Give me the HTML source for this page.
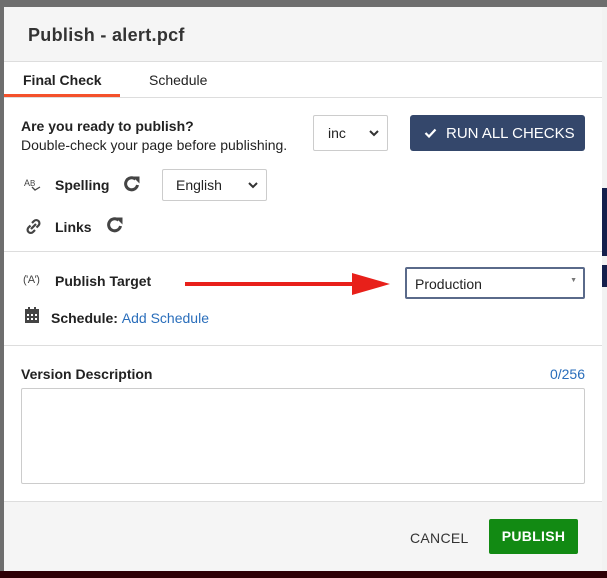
<!DOCTYPE html>
<html><head><style>
*{box-sizing:border-box;margin:0;padding:0}
body{width:607px;height:578px;background:#6e6e6e;position:relative;overflow:hidden;font-family:"Liberation Sans",Arial,sans-serif;color:#222}
.bgr{position:absolute;left:602px;top:7px;width:5px;height:565px;background:#f2f2f2}
.nv{position:absolute;background:#141f4c}
.btm{position:absolute;left:0;top:571px;width:607px;height:7px;background:#2e0006}
.m{position:absolute;left:4px;top:7px;width:598px;height:564px;background:#fff}
.hd{position:absolute;left:0;top:0;width:100%;height:55px;background:#f5f5f5;border-bottom:1px solid #ddd}
.hd h1{position:absolute;left:24px;top:18px;font-size:18px;font-weight:bold;color:#333;letter-spacing:.3px}
.tabs{position:absolute;top:55px;left:0;width:100%;height:36px;border-bottom:1px solid #ddd}
.t{position:absolute;top:10px;font-size:14px}
.ul{position:absolute;left:0;top:32px;width:116px;height:3px;background:#f4512c}
.a{position:absolute}
.sel{position:absolute;border:1px solid #ccc;border-radius:2px;background:#fff;font-size:14px}
.chev{position:absolute;right:8px;top:50%;margin-top:-4px}
.b{font-weight:bold;font-size:14px}
.hr{position:absolute;left:0;width:100%;height:1px;background:#ddd}
</style></head><body>
<div class="bgr"></div>
<div class="nv" style="left:602px;top:188px;width:5px;height:68px"></div>
<div class="nv" style="left:602px;top:265px;width:5px;height:22px"></div>
<div class="btm"></div>
<div class="m">
 <div class="hd"><h1>Publish - alert.pcf</h1></div>
 <div class="tabs">
  <div class="t b" style="left:19px;font-size:14px">Final Check</div>
  <div class="t" style="left:145px">Schedule</div>
  <div class="ul"></div>
 </div>
 <div class="a b" style="left:17px;top:111px">Are you ready to publish?</div>
 <div class="a" style="left:17px;top:130px;font-size:14px">Double-check your page before publishing.</div>
 <div class="sel" style="left:309px;top:108px;width:75px;height:36px"><span class="a" style="left:14px;top:9px">inc</span>
  <svg class="chev" width="10" height="8" viewBox="0 0 10 8"><path d="M1 2l4 4 4-4" stroke="#333" stroke-width="2" fill="none"/></svg></div>
 <div class="a" style="left:406px;top:108px;width:175px;height:36px;background:#34476b;border-radius:3px;color:#fff;font-size:15px">
  <svg class="a" style="left:14px;top:13px" width="13" height="10" viewBox="0 0 13 10"><path d="M1.5 5l3.5 3.5L11.5 1.5" stroke="#fff" stroke-width="2.2" fill="none"/></svg>
  <span class="a" style="left:36px;top:10px">RUN ALL CHECKS</span></div>
 <div class="a" style="left:20px;top:171px;font-size:9px;color:#444">A<span style="font-size:8px">B</span></div>
 <svg class="a" style="left:27px;top:179px" width="10" height="6"><path d="M1 1l3 3 5-3" stroke="#444" stroke-width="1.3" fill="none"/></svg>
 <div class="a b" style="left:51px;top:170px">Spelling</div>
 <svg class="a" style="left:119px;top:168px" width="18" height="18" viewBox="0 0 18 18"><path d="M14.5 10A6 6 0 1 1 12.5 4.2" stroke="#444" stroke-width="3" fill="none"/><path d="M9.5 1.5h7v7z" fill="#444"/></svg>
 <div class="sel" style="left:158px;top:162px;width:105px;height:32px"><span class="a" style="left:13px;top:7px">English</span>
  <svg class="chev" width="10" height="8" viewBox="0 0 10 8"><path d="M1 2l4 4 4-4" stroke="#333" stroke-width="2" fill="none"/></svg></div>
 <svg class="a" style="left:21px;top:211px" width="17" height="17" viewBox="0 0 17 17"><g stroke="#444" stroke-width="2.2" fill="none"><path d="M7 5l2-2a3 3 0 0 1 4.5 4.5l-2 2"/><path d="M10 12l-2 2a3 3 0 0 1-4.5-4.5l2-2"/><path d="M6 11l5-5"/></g></svg>
 <div class="a b" style="left:51px;top:212px">Links</div>
 <svg class="a" style="left:102px;top:209px" width="18" height="18" viewBox="0 0 18 18"><path d="M14.5 10A6 6 0 1 1 12.5 4.2" stroke="#444" stroke-width="3" fill="none"/><path d="M9.5 1.5h7v7z" fill="#444"/></svg>
 <div class="hr" style="top:244px"></div>
 <div class="a" style="left:19px;top:267px;font-size:11px;color:#444;letter-spacing:-0.5px">('A')</div>
 <div class="a b" style="left:51px;top:266px">Publish Target</div>
 <div class="a" style="left:181px;top:275px;width:170px;height:4px;background:#e8201a"></div>
 <svg class="a" style="left:348px;top:266px" width="38" height="22"><path d="M0 0L38 11 0 22z" fill="#e8201a"/></svg>
 <div class="a" style="left:401px;top:260px;width:180px;height:32px;border:2px solid #5a6a8a;border-radius:2px;font-size:14px"><span class="a" style="left:8px;top:7px">Production</span><span class="a" style="right:6px;top:8px;font-size:7px;color:#777">▼</span></div>
 <svg class="a" style="left:21px;top:300px" width="14" height="16" viewBox="0 0 14 16"><rect x="3" y="0" width="2" height="4" fill="#444"/><rect x="9" y="0" width="2" height="4" fill="#444"/><rect x="0" y="2" width="14" height="14" fill="#444"/><g fill="#fff"><rect x="2" y="7" width="2" height="2"/><rect x="6" y="7" width="2" height="2"/><rect x="10" y="7" width="2" height="2"/><rect x="2" y="11" width="2" height="2"/><rect x="6" y="11" width="2" height="2"/><rect x="10" y="11" width="2" height="2"/></g></svg>
 <div class="a b" style="left:47px;top:303px">Schedule: <span style="font-weight:normal;color:#2a6ebb">Add Schedule</span></div>
 <div class="hr" style="top:338px"></div>
 <div class="a b" style="left:17px;top:359px">Version Description</div>
 <div class="a" style="right:17px;top:359px;font-size:14px;color:#2a6ebb">0/256</div>
 <div class="a" style="left:17px;top:381px;width:564px;height:96px;border:1px solid #ccc;border-radius:2px"></div>
 <div class="a" style="left:0;top:494px;width:100%;height:70px;background:#f5f5f5;border-top:1px solid #ddd">
  <div class="a" style="left:406px;top:28px;font-size:14px;color:#333;letter-spacing:.3px">CANCEL</div>
  <div class="a" style="left:485px;top:17px;width:89px;height:35px;background:#128a13;border-radius:2px;color:#fff;font-size:14px;font-weight:bold;text-align:center;line-height:35px;letter-spacing:.3px">PUBLISH</div>
 </div>
</div>
</body></html>
